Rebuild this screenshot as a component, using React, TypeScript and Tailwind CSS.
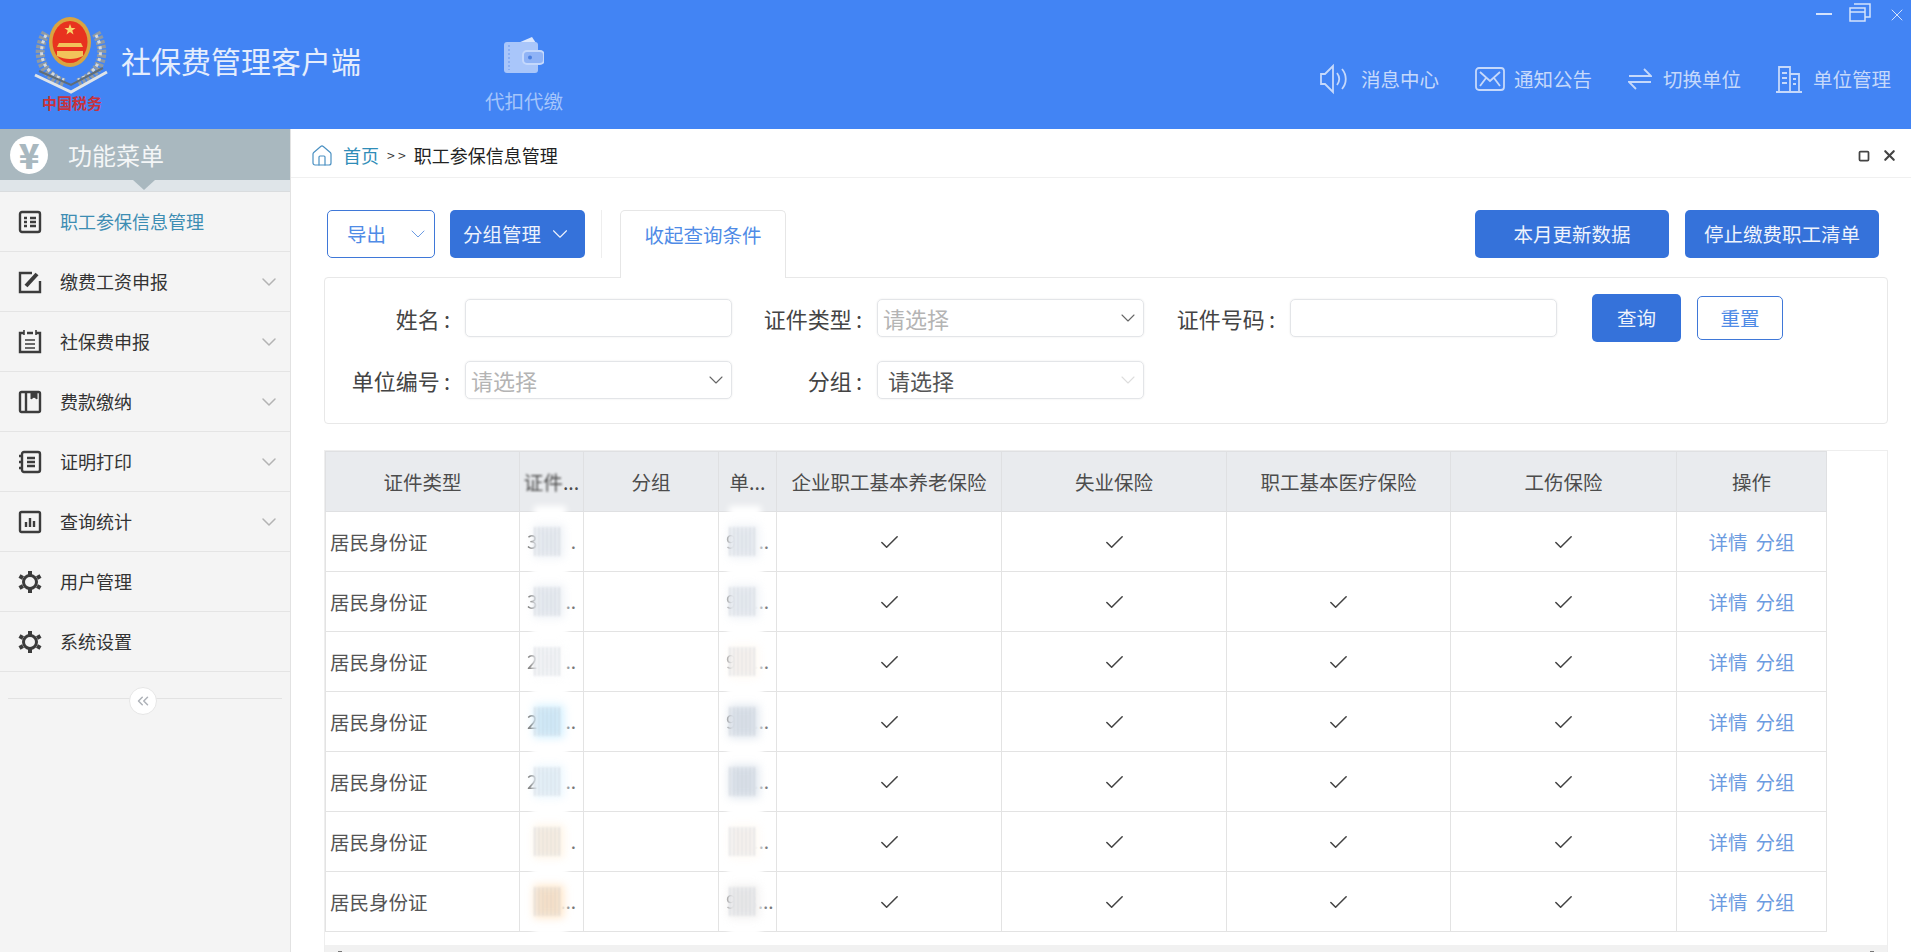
import { ChevronDown, Check, ChevronsLeft, Home, Square, X } from "lucide-react";

const Logo = () => (
  <svg viewBox="0 0 76 80" className="h-[80px] w-[76px]">
    <path d="M12 18 C1 36 5 58 30 68" fill="none" stroke="#8f9aa3" strokeWidth="9" strokeDasharray="3 1.5" />
    <path d="M62 18 C73 36 69 58 44 68" fill="none" stroke="#8f9aa3" strokeWidth="9" strokeDasharray="3 1.5" />
    <path d="M12 20 C3 37 7 56 30 65" fill="none" stroke="#d5dade" strokeWidth="3" strokeDasharray="3 3" />
    <path d="M62 20 C71 37 67 56 44 65" fill="none" stroke="#d5dade" strokeWidth="3" strokeDasharray="3 3" />
    <path d="M1 60 L37 77 L73 57" fill="none" stroke="#dfe4e8" strokeWidth="3" />
    <path d="M5 56 L37 70 L69 53" fill="none" stroke="#5f6d78" strokeWidth="2" />
    <ellipse cx="36" cy="27" rx="21" ry="25" fill="#d9a441" />
    <ellipse cx="36" cy="27" rx="17.5" ry="21" fill="#e8321f" />
    <path d="M36 9 l1.5 4 h4 l-3.2 2.4 1.2 4 -3.5 -2.4 -3.5 2.4 1.2 -4 -3.2 -2.4 h4z" fill="#f8d66a" />
    <path d="M25 28 h22 l2 4 h-26z M23 36 h26 v5 c-8 4 -18 4 -26 0z" fill="#f2c35a" />
  </svg>
);

const Wallet = () => (
  <svg viewBox="0 0 40 36" className="h-[36px] w-[40px]">
    <path d="M14 6 L28 0 L32 6z" fill="#dbe7fd" />
    <rect x="0" y="5" width="34" height="31" rx="3" fill="#a9c6fa" />
    <path d="M5 8 v25" stroke="#7fa8f3" strokeWidth="1.5" strokeDasharray="2 2" />
    <rect x="19" y="14" width="21" height="13" rx="4" fill="#8fb3f6" stroke="#c4d8fc" strokeWidth="2" />
    <circle cx="26" cy="20.5" r="2" fill="#4a7fe0" />
  </svg>
);

const topIcon = { fill: "none", stroke: "#c6d9fb", strokeWidth: 1.8 };

const topLinks = [
  {
    label: "消息中心",
    ml: "ml-0",
    gap: "mr-[14px]",
    icon: (
      <svg viewBox="0 0 28 32" className="h-[32px] w-[28px]" {...topIcon}>
        <path d="M2 11 h4 L14 3 V29 L6 21 H2z" />
        <path d="M18 10 c3 4 3 8 0 12 M23 6 c5 6 5 14 0 20" />
      </svg>
    ),
  },
  {
    label: "通知公告",
    ml: "ml-[36px]",
    gap: "mr-[9px]",
    icon: (
      <svg viewBox="0 0 30 24" className="h-[24px] w-[30px]" {...topIcon}>
        <rect x="1" y="1" width="28" height="22" rx="3" />
        <path d="M5 5 L15 14 L25 5 M5 19 L11 11 M25 19 L19 11" />
      </svg>
    ),
  },
  {
    label: "切换单位",
    ml: "ml-[36px]",
    gap: "mr-[11px]",
    icon: (
      <svg viewBox="0 0 24 22" className="h-[22px] w-[24px]" {...topIcon}>
        <path d="M1 8 H23 L16 1 M23 14 H1 L8 21" />
      </svg>
    ),
  },
  {
    label: "单位管理",
    ml: "ml-[35px]",
    gap: "mr-[11px]",
    icon: (
      <svg viewBox="0 0 26 28" className="h-[28px] w-[26px]" {...topIcon}>
        <path d="M3 27 V2 H14 V27 M14 9 H23 V27 M0 27 H26" />
        <path d="M6 8 H11 M6 13 H11 M6 18 H11 M17 14 H20 M17 19 H20" />
      </svg>
    ),
  },
];

const menuIcon = {
  fill: "none",
  stroke: "#3c3c3c",
  strokeWidth: 2.4,
  viewBox: "0 0 24 24",
  className: "h-[24px] w-[24px] shrink-0",
};

const Gear = () => (
  <svg {...menuIcon}>
    <circle cx="12" cy="12" r="6.5" strokeWidth="3" />
    <path
      d="M12 1 V5 M12 19 V23 M1.5 6 L5 8 M19 16 L22.5 18 M1.5 18 L5 16 M19 8 L22.5 6"
      strokeWidth="4"
    />
  </svg>
);

const menus = [
  {
    label: "职工参保信息管理",
    active: true,
    icon: (
      <svg {...menuIcon}>
        <rect x="2" y="2" width="20" height="20" rx="2" />
        <path d="M6 8 H9 M12 8 H18 M6 12 H9 M12 12 H18 M6 16 H9 M12 16 H18" />
      </svg>
    ),
  },
  {
    label: "缴费工资申报",
    arrow: true,
    icon: (
      <svg {...menuIcon}>
        <path d="M14 3 H2 V22 H22 V11" />
        <path d="M8 16 L19 4" strokeWidth="4" />
      </svg>
    ),
  },
  {
    label: "社保费申报",
    arrow: true,
    icon: (
      <svg {...menuIcon}>
        <path d="M6 3 H2 V22 H22 V3 H18 M9 3 H15" />
        <path d="M6 0 V5 M18 0 V5 M7 10 H17 M7 14 H17 M7 18 H17" strokeWidth="1.6" />
      </svg>
    ),
  },
  {
    label: "费款缴纳",
    arrow: true,
    icon: (
      <svg {...menuIcon}>
        <rect x="2" y="2" width="20" height="20" rx="1.5" />
        <path d="M8 2 V22" />
        <path d="M13 2 H19 V9 L16 7 L13 9z" fill="#3c3c3c" strokeWidth="1" />
      </svg>
    ),
  },
  {
    label: "证明打印",
    arrow: true,
    icon: (
      <svg {...menuIcon}>
        <rect x="4" y="2" width="18" height="20" rx="2" />
        <path d="M9 8 H17 M9 12 H17 M9 16 H17" />
        <path d="M1 6 H5 M1 12 H5 M1 18 H5" />
      </svg>
    ),
  },
  {
    label: "查询统计",
    arrow: true,
    icon: (
      <svg {...menuIcon}>
        <rect x="2" y="2" width="20" height="20" rx="1.5" />
        <path d="M8 17 V12 M12 17 V8 M16 17 V11" />
      </svg>
    ),
  },
  { label: "用户管理", icon: <Gear /> },
  { label: "系统设置", icon: <Gear /> },
];

const smudgeLines =
  "bg-[repeating-linear-gradient(90deg,#aab2bf_0_2px,transparent_2px_4px)]";

// idTint / unitTint: colour left behind by the mosaic over the masked digits
const rows = [
  { id: "3", idEnd: ".", idTint: "bg-slate-200", unit: "9", unitEnd: "..", unitTint: "bg-slate-200", medical: false },
  { id: "3", idEnd: "..", idTint: "bg-slate-200", unit: "9", unitEnd: "...", unitTint: "bg-slate-200", medical: true },
  { id: "2", idEnd: "..", idTint: "bg-gray-50", unit: "9", unitEnd: "...", unitTint: "bg-orange-50", medical: true },
  { id: "2", idEnd: "..", idTint: "bg-sky-200", unit: "9", unitEnd: "...", unitTint: "bg-slate-300", medical: true },
  { id: "2", idEnd: "..", idTint: "bg-sky-100", unit: "", unitEnd: "...", unitTint: "bg-slate-300", medical: true },
  { id: "", idEnd: ".", idTint: "bg-orange-100", unit: "", unitEnd: "...", unitTint: "bg-orange-50", medical: true },
  { id: "", idEnd: "...", idTint: "bg-orange-200", unit: "913", unitEnd: "...", unitTint: "bg-stone-200", medical: true },
];

const Masked = ({ head, end, tint, left }: { head: string; end: string; tint: string; left: string }) => (
  <div className="flex items-end justify-between pl-[7px] pr-[7px] text-[19px] text-[#777]">
    <span className="blur-[0.6px]">{head}</span>
    <span>{end}</span>
    <span className={`absolute -inset-y-[6px] ${left} w-[32px] bg-white blur-[3px]`} />
    <span className={`absolute inset-y-[13px] ${left} w-[30px] ${tint} opacity-60 blur-[4px]`} />
    <span className={`absolute inset-y-[15px] ${left} w-[26px] ${smudgeLines} opacity-35 blur-[1px]`} />
  </div>
);

const Select = ({ text, dark }: { text: string; dark?: boolean }) => (
  <div className={`flex h-[38px] w-[267px] items-center justify-between rounded-[5px] border border-[#e3e5e8] pr-[3px] shadow-[0_0_2px_#e8e8e8] ${dark ? "pl-[10px] text-[#555]" : "pl-[5px] text-[#b4b4b4]"}`}>
    <span className="text-[22px]">{text}</span>
    <ChevronDown size={24} strokeWidth={1.1} className={dark ? "text-[#ddd]" : "text-[#666]"} />
  </div>
);

const Label = ({ text, className }: { text: string; className: string }) => (
  <div className={`mr-[15px] shrink-0 text-right text-[22px] leading-[38px] text-[#444] ${className}`}>
    {text}
    <span className="ml-[4px]">:</span>
  </div>
);

const Tick = () => <Check size={23} strokeWidth={1.6} className="mx-auto mt-[2px] text-[#444]" />;

const App = () => {
  return (
    <div className="flex h-[952px] w-[1911px] flex-col overflow-hidden bg-white font-['Noto_Sans_CJK_SC','Liberation_Sans',sans-serif]">
      <header className="relative flex h-[129px] shrink-0 items-start bg-[#4284f4]">
        <div className="ml-[34px] mt-[15px] flex w-[76px] flex-col items-center">
          <Logo />
          <span className="-mt-[1px] text-[15px] font-bold leading-[18px] text-[#c8323c]">中国税务</span>
        </div>
        <div className="ml-[11px] mt-[40px] text-[30px] leading-[40px] text-[#e4edfd]">社保费管理客户端</div>
        <div className="ml-[124px] mt-[37px] flex w-[78px] flex-col items-center">
          <Wallet />
          <span className="mt-[15px] whitespace-nowrap text-[19.5px] leading-[26px] text-[#a5c5fb]">代扣代缴</span>
        </div>
        <nav className="ml-auto mr-[20px] mt-[63px] flex items-center text-[19.5px] leading-[32px] text-[#c6d9fb]">
          {topLinks.map((item) => (
            <div key={item.label} className={`flex items-center ${item.ml}`}>
              <span className={item.gap}>{item.icon}</span>
              <span className="whitespace-nowrap">{item.label}</span>
            </div>
          ))}
        </nav>
        <div className="absolute right-[4px] top-[3px] flex items-start text-[#d5e3fc]">
          <span className="mr-[17px] mt-[10px] h-[2px] w-[16px] bg-[#d5e3fc]" />
          <svg viewBox="0 0 22 19" className="mr-[16px] h-[19px] w-[22px]" fill="none" stroke="currentColor" strokeWidth="1.5">
            <rect x="1" y="5" width="15" height="13" />
            <path d="M1 9 H16 M5 1 H21 V14 H16" />
          </svg>
          <X size={20} strokeWidth={1.2} className="mt-[2px]" />
        </div>
      </header>

      <div className="flex min-h-0 flex-1">
        <aside className="w-[291px] shrink-0 border-r border-[#e2e2e2] bg-[#f4f4f4]">
          <div className="flex h-[51px] items-center bg-[#a9b8bf] pl-[10px]">
            <span className="flex h-[38px] w-[38px] items-center justify-center rounded-full bg-white text-[34px] font-black leading-none text-[#a9b8bf]">¥</span>
            <span className="ml-[20px] text-[24px] text-[#f4f6f7]">功能菜单</span>
          </div>
          <div className="relative h-[12px] border-b border-[#d9dcde] bg-[#dfe5e9]">
            <span className="absolute left-[133px] top-0 h-0 w-0 border-x-[11px] border-t-[10px] border-x-transparent border-t-[#a9b8bf]" />
          </div>
          {menus.map((m) => (
            <div key={m.label} className="flex h-[60px] items-center border-b border-[#e4e4e4] pl-[18px] pr-[9px] last:border-[#cfcfcf]">
              {m.icon}
              <span className={`ml-[18px] text-[18px] ${m.active ? "text-[#3d8db3]" : "text-[#333]"}`}>{m.label}</span>
              {m.arrow && <ChevronDown size={24} strokeWidth={1.5} className="ml-auto text-[#b3b3b3]" />}
            </div>
          ))}
          <div className="relative mx-[8px] mt-[26px] h-px bg-[#e2e2e2]">
            <span className="absolute left-[121px] -top-[11px] flex h-[28px] w-[28px] items-center justify-center rounded-full border border-[#e6e6e6] bg-white text-[#aeb2b8]">
              <ChevronsLeft size={18} strokeWidth={2} />
            </span>
          </div>
        </aside>

        <main className="flex min-w-0 flex-1 flex-col">
          <div className="flex h-[49px] shrink-0 items-center border-b border-[#f0f0f0] pl-[19px] pr-[13px] pt-[5px] text-[18px]">
            <Home size={24} strokeWidth={1.2} className="text-[#4a90c2]" />
            <span className="ml-[9px] text-[#2f8db8]">首页</span>
            <span className="ml-[8px] text-[14px] text-[#333]">&gt; &gt;</span>
            <span className="ml-[8px] text-[#222]">职工参保信息管理</span>
            <Square size={12} strokeWidth={3.5} className="ml-auto text-[#444]" />
            <X size={17} strokeWidth={3} className="ml-[11px] text-[#444]" />
          </div>

          <div className="flex flex-1 flex-col pl-[33px] pr-[23px] pt-[32px]">
            <div className="flex h-[67px] shrink-0 items-start">
              <button className="ml-[3px] flex h-[48px] w-[108px] items-center rounded-[5px] border border-[#3f78d8] bg-white pl-[19px] text-[19.5px] text-[#4f8be6]">
                导出
                <ChevronDown size={24} strokeWidth={1} className="ml-[20px] text-[#6b9be3]" />
              </button>
              <button className="ml-[15px] flex h-[48px] w-[135px] items-center rounded-[5px] bg-[#3572da] pl-[13px] text-[19.5px] text-[#eef3fc]">
                分组管理
                <ChevronDown size={26} strokeWidth={1} className="ml-[6px]" />
              </button>
              <span className="ml-[16px] h-[48px] w-px bg-[#eeeeee]" />
              <div className="relative z-10 ml-[18px] flex h-[68px] w-[166px] items-start justify-center rounded-t-[5px] border border-b-0 border-[#e6e6e6] bg-white pt-[9px] text-[19.5px] text-[#4f8be6]">
                收起查询条件
              </div>
              <button className="ml-auto flex h-[48px] w-[194px] items-center justify-center rounded-[5px] bg-[#3572da] text-[19.5px] text-[#eef3fc]">
                本月更新数据
              </button>
              <button className="ml-[16px] mr-[9px] flex h-[48px] w-[194px] items-center justify-center rounded-[5px] bg-[#3572da] text-[19.5px] text-[#eef3fc]">
                停止缴费职工清单
              </button>
            </div>

            <section className="h-[147px] shrink-0 rounded-[4px] border border-[#e8e8e8] pt-[16px]">
              <div className="flex h-[48px] items-center">
                <Label text="姓名" className="w-[125px]" />
                <div className="h-[38px] w-[267px] rounded-[5px] border border-[#e3e5e8] shadow-[0_0_2px_#e8e8e8]" />
                <Label text="证件类型" className="w-[130px]" />
                <Select text="请选择" />
                <Label text="证件号码" className="w-[131px]" />
                <div className="h-[38px] w-[267px] rounded-[5px] border border-[#e3e5e8] shadow-[0_0_2px_#e8e8e8]" />
                <button className="ml-[35px] flex h-[48px] w-[89px] items-center justify-center rounded-[5px] bg-[#3572da] text-[19.5px] text-[#eef3fc]">
                  查询
                </button>
                <button className="ml-[16px] flex h-[44px] w-[86px] items-center justify-center rounded-[5px] border border-[#3f78d8] bg-white text-[19.5px] text-[#4f8be6]">
                  重置
                </button>
              </div>
              <div className="mt-[19px] flex h-[38px] items-center">
                <Label text="单位编号" className="w-[125px]" />
                <Select text="请选择" />
                <Label text="分组" className="w-[130px]" />
                <Select text="请选择" dark />
              </div>
            </section>

            <div className="mt-[26px] flex-1 border-x border-t border-[#eeeeee]">
              <table className="w-[1501px] table-fixed border-collapse text-center text-[19.5px] text-[#555]">
                <colgroup>
                  <col className="w-[194px]" />
                  <col className="w-[64px]" />
                  <col className="w-[135px]" />
                  <col className="w-[58px]" />
                  <col className="w-[225px]" />
                  <col className="w-[225px]" />
                  <col className="w-[224px]" />
                  <col className="w-[226px]" />
                  <col className="w-[150px]" />
                </colgroup>
                <thead>
                  <tr className="h-[60px] bg-[#e9ebee] text-[#4c4c4c]">
                    <th className="border border-[#dfe0e2] font-normal">证件类型</th>
                    <th className="relative overflow-hidden whitespace-nowrap border border-[#dfe0e2] font-normal">
                      <span className="blur-[0.8px]">证件</span>...
                    </th>
                    <th className="border border-[#dfe0e2] font-normal">分组</th>
                    <th className="whitespace-nowrap border border-[#dfe0e2] font-normal">单...</th>
                    <th className="whitespace-nowrap border border-[#dfe0e2] font-normal">企业职工基本养老保险</th>
                    <th className="border border-[#dfe0e2] font-normal">失业保险</th>
                    <th className="border border-[#dfe0e2] font-normal">职工基本医疗保险</th>
                    <th className="border border-[#dfe0e2] font-normal">工伤保险</th>
                    <th className="border border-[#dfe0e2] font-normal">操作</th>
                  </tr>
                </thead>
                <tbody>
                  {rows.map((r, i) => (
                    <tr key={i} className="h-[60px]">
                      <td className="border border-[#e3e3e3] pl-[4px] pt-[1px] text-left">居民身份证</td>
                      <td className="relative border border-[#e3e3e3]">
                        <Masked head={r.id} end={r.idEnd} tint={r.idTint} left="left-[14px]" />
                      </td>
                      <td className="border border-[#e3e3e3]" />
                      <td className="relative border border-[#e3e3e3]">
                        <Masked head={r.unit} end={r.unitEnd} tint={r.unitTint} left="left-[10px]" />
                      </td>
                      <td className="border border-[#e3e3e3]">
                        <Tick />
                      </td>
                      <td className="border border-[#e3e3e3]">
                        <Tick />
                      </td>
                      <td className="border border-[#e3e3e3]">{r.medical && <Tick />}</td>
                      <td className="border border-[#e3e3e3]">
                        <Tick />
                      </td>
                      <td className="border border-[#e3e3e3] pt-[1px] text-[#6c9be0]">
                        <span>详情</span>
                        <span className="ml-[8px]">分组</span>
                      </td>
                    </tr>
                  ))}
                </tbody>
              </table>
              <div className="mt-[13px] flex h-[8px] items-end justify-between bg-[#f1f1f1] px-[13px]">
                <span className="h-[2px] w-[4px] bg-[#777]" />
                <span className="h-[2px] w-[4px] bg-[#777]" />
              </div>
            </div>
          </div>
        </main>
      </div>
    </div>
  );
};

export default App;
